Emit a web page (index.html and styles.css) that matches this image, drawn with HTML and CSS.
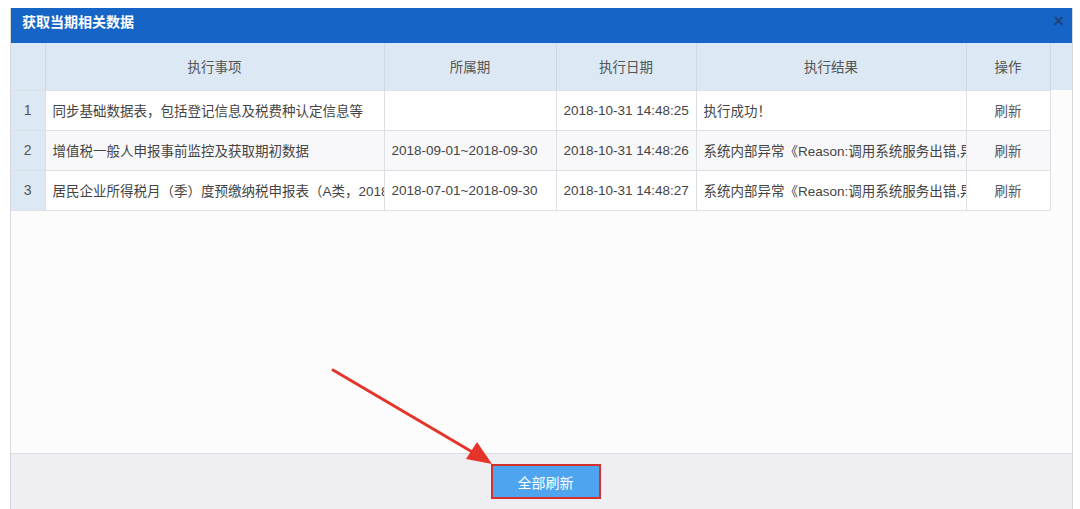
FILE: index.html
```html
<!DOCTYPE html>
<html lang="zh-CN">
<head>
  <meta charset="UTF-8">
  <title>获取当期相关数据</title>
  <link rel="stylesheet" href="styles.css">
</head>
<body>
  <!-- 弹窗 -->
  <div class="dialog">
    <div class="dialog-header">
      <span class="dialog-title">获取当期相关数据</span>
      <span class="dialog-close">×</span>
    </div>

    <div class="dialog-body">
      <table class="task-table">
        <colgroup>
          <col class="c-idx">
          <col class="c-item">
          <col class="c-period">
          <col class="c-date">
          <col class="c-result">
          <col class="c-op">
          <col class="c-fill">
        </colgroup>
        <thead>
          <tr>
            <th></th>
            <th>执行事项</th>
            <th>所属期</th>
            <th>执行日期</th>
            <th>执行结果</th>
            <th>操作</th>
            <th class="fill"></th>
          </tr>
        </thead>
        <tbody>
          <tr>
            <td class="idx">1</td>
            <td><span class="cell">同步基础数据表，包括登记信息及税费种认定信息等</span></td>
            <td></td>
            <td><span class="cell">2018-10-31 14:48:25</span></td>
            <td><span class="cell">执行成功！</span></td>
            <td class="op">刷新</td>
            <td class="fill"></td>
          </tr>
          <tr class="alt">
            <td class="idx">2</td>
            <td><span class="cell">增值税一般人申报事前监控及获取期初数据</span></td>
            <td><span class="cell">2018-09-01~2018-09-30</span></td>
            <td><span class="cell">2018-10-31 14:48:26</span></td>
            <td><span class="cell">系统内部异常《Reason:调用系统服务出错,异常信息》</span></td>
            <td class="op">刷新</td>
            <td class="fill"></td>
          </tr>
          <tr>
            <td class="idx">3</td>
            <td><span class="cell">居民企业所得税月（季）度预缴纳税申报表（A类，2018版）</span></td>
            <td><span class="cell">2018-07-01~2018-09-30</span></td>
            <td><span class="cell">2018-10-31 14:48:27</span></td>
            <td><span class="cell">系统内部异常《Reason:调用系统服务出错,异常信息》</span></td>
            <td class="op">刷新</td>
            <td class="fill"></td>
          </tr>
        </tbody>
      </table>
    </div>

    <div class="dialog-footer">
      <button class="btn-refresh-all">全部刷新</button>
    </div>
  </div>

  <!-- 标注箭头 -->
  <svg class="annotation" width="1080" height="509" viewBox="0 0 1080 509">
    <line x1="333" y1="370" x2="474" y2="453" stroke="#e5342a" stroke-width="3" stroke-linecap="round"/>
    <polygon points="492,464 466,459 477,442" fill="#e5342a"/>
  </svg>
</body>
</html>
```

FILE: styles.css
```css
* {
  margin: 0;
  padding: 0;
  box-sizing: border-box;
}

body {
  font-family: 'Liberation Sans', 'Noto Sans CJK SC', Arial, sans-serif;
  background: #ffffff;
  color: #444;
  width: 1080px;
  height: 509px;
  overflow: hidden;
  position: relative;
}

/* 弹窗 */
.dialog {
  margin: 8px 0 0 10px;
  width: 1063px;
  border-left: 1px solid #d6d8dc;
  border-right: 1px solid #d6d8dc;
}

.dialog-header {
  height: 35px;
  background: #1665c6;
  display: flex;
  align-items: center;
  justify-content: space-between;
  padding: 0 8px 0 11px;
}

.dialog-title {
  color: #ffffff;
  font-size: 14px;
  font-weight: bold;
  margin-top: -10px;
}

.dialog-close {
  color: #1f4478;
  font-size: 18px;
  font-weight: bold;
  margin-top: -8px;
}

.dialog-body {
  height: 411px;
  background: #fcfcfd;
  border-bottom: 1px solid #dcdde0;
}

/* 表格 */
.task-table {
  width: 100%;
  border-collapse: collapse;
  table-layout: fixed;
  font-size: 13.5px;
}

.c-idx { width: 34px; }
.c-item { width: 339px; }
.c-period { width: 172px; }
.c-date { width: 140px; }
.c-result { width: 270px; }
.c-op { width: 84px; }
.c-fill { width: 22px; }

.task-table th {
  height: 47px;
  background: #dce8f4;
  color: #555;
  font-weight: normal;
  border-right: 1px solid #cfdae6;
  text-align: center;
}

.task-table th.fill {
  border-right: none;
}

.task-table td {
  height: 40px;
  background: #ffffff;
  border: 1px solid #dedfe2;
  padding: 0 0 0 7px;
  color: #444;
}

.task-table td .cell {
  display: block;
  white-space: nowrap;
  overflow: hidden;
}

.task-table tr.alt td {
  background: #f8f8fa;
}

.task-table td.idx {
  background: #dce8f4;
  text-align: center;
  padding: 0;
  border-left: none;
  color: #555;
  font-size: 14px;
}

.task-table tr.alt td.idx {
  background: #dce8f4;
}

.task-table td.op {
  text-align: center;
  padding: 0;
  color: #555;
}

.task-table td.fill,
.task-table tr.alt td.fill {
  background: #fcfcfd;
  border: none;
  border-left: 1px solid #d4d5d8;
}

/* 底部 */
.dialog-footer {
  height: 60px;
  background: #efeff3;
  display: flex;
  justify-content: center;
  padding-top: 10px;
  padding-left: 8px;
}

.btn-refresh-all {
  width: 110px;
  height: 35px;
  background: #4ea4ef;
  border: 2px solid #d6312c;
  color: #ffffff;
  font-family: inherit;
  font-size: 14px;
}

/* 标注 */
.annotation {
  position: absolute;
  top: 0;
  left: 0;
  pointer-events: none;
}
```
